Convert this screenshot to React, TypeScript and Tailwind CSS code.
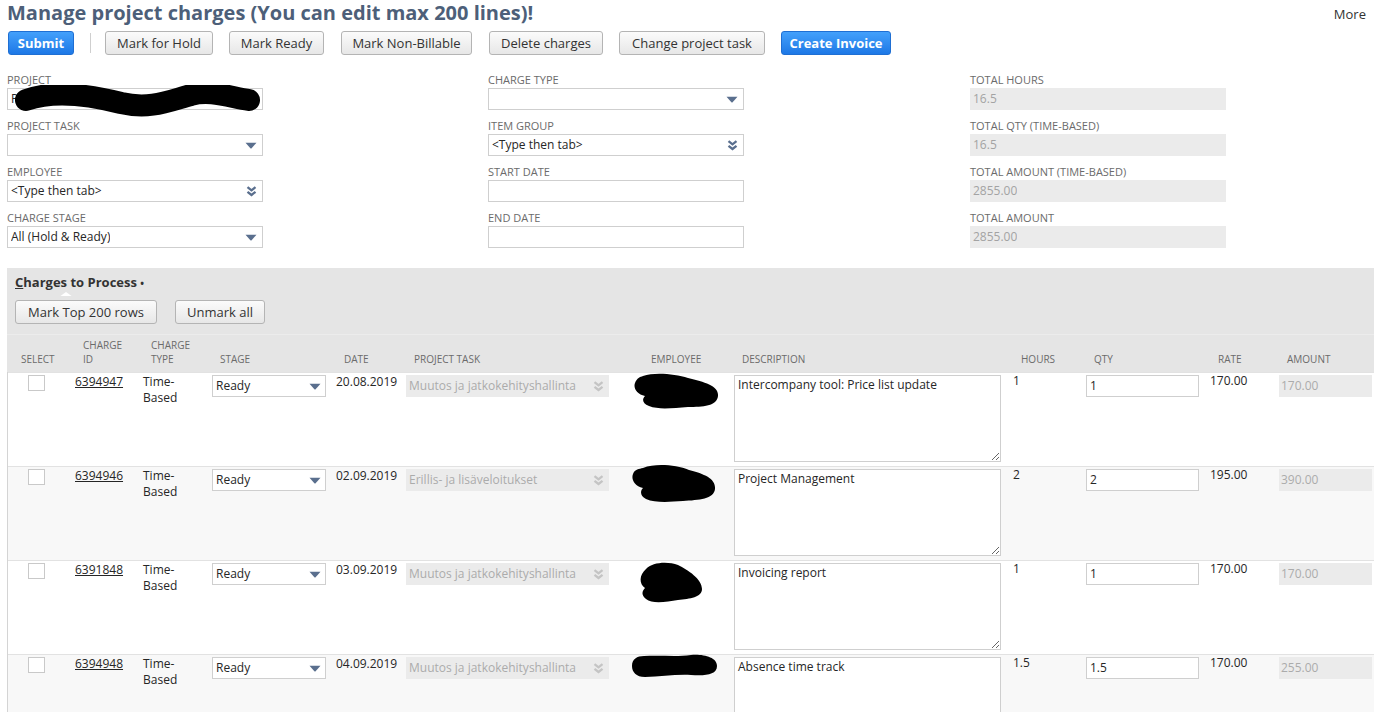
import React from "react";

const SLATE = "#5a6f8e";

function Tri({ color = SLATE }: { color?: string }) {
  return (
    <svg width="12" height="7" viewBox="0 0 12 7" className="shrink-0">
      <path d="M0.5 0.8 H11.5 L6.6 6.2 Q6 6.8 5.4 6.2 Z" fill={color} />
    </svg>
  );
}

function DChev({ color = SLATE }: { color?: string }) {
  return (
    <svg width="11" height="11" viewBox="0 0 11 11" className="shrink-0">
      <path d="M1.5 1.2 L5.5 4.4 L9.5 1.2 M1.5 5.8 L5.5 9 L9.5 5.8" stroke={color} strokeWidth="2.3" fill="none" />
    </svg>
  );
}

function Btn({ children, w, primary }: { children: React.ReactNode; w: string; primary?: boolean }) {
  if (primary) {
    return (
      <button
        className={`${w} h-[24px] shrink-0 rounded-[3px] border border-[#1f6fd3] bg-linear-to-b from-[#43a0fb] to-[#1d78e6] text-[13px] font-bold text-white leading-[22px]`}
      >
        {children}
      </button>
    );
  }
  return (
    <button
      className={`${w} h-[24px] shrink-0 rounded-[3px] border border-[#b4b4b4] bg-linear-to-b from-[#fbfbfb] to-[#e7e7e7] text-[13px] text-[#333] leading-[22px]`}
    >
      {children}
    </button>
  );
}

type FieldProps = {
  label: string;
  value?: string;
  icon?: "tri" | "dchev";
  readOnly?: boolean;
  redacted?: boolean;
};

function Field({ label, value, icon, readOnly, redacted }: FieldProps) {
  return (
    <div className="flex flex-col">
      <div className="h-[14px] text-[11px] leading-[14px] uppercase text-[#6b6b6b]">{label}</div>
      <div
        className={`relative mt-[1px] flex h-[22px] w-[256px] items-center justify-between pl-[3px] pr-[5px] text-[12px] ${
          readOnly ? "bg-[#ebebeb] text-[#a3a3a3]" : "border border-[#cfcfcf] bg-white text-[#262626]"
        }`}
      >
        <span className="truncate">{value}</span>
        {icon === "tri" && <Tri />}
        {icon === "dchev" && <DChev />}
        {redacted && (
          <svg
            width="252"
            height="34"
            viewBox="0 0 252 34"
            className="absolute left-[3px] top-[-4px]"
          >
            <path
              d="M15 15 C 40 6, 75 9, 110 18 C 140 25, 160 15, 180 10 C 198 5, 215 11, 238 15"
              stroke="#000"
              strokeWidth="22"
              strokeLinecap="round"
              fill="none"
            />
          </svg>
        )}
      </div>
    </div>
  );
}

const COLS = "grid-cols-[62px_68px_69px_124px_70px_237px_91px_279px_73px_124px_69px_99px]";

type Row = {
  id: string;
  date: string;
  task: string;
  desc: string;
  hours: string;
  qty: string;
  rate: string;
  amount: string;
  alt?: boolean;
  blob: { d: string; w: number; h: number; left: number; top: number };
};

const rows: Row[] = [
  {
    id: "6394947",
    date: "20.08.2019",
    task: "Muutos ja jatkokehityshallinta",
    desc: "Intercompany tool: Price list update",
    hours: "1",
    qty: "1",
    rate: "170.00",
    amount: "170.00",
    blob: {
      w: 86,
      h: 37,
      left: -5,
      top: 0,
      d: "M10 3 C 22 -1, 42 1, 55 5 C 72 9, 86 13, 85 23 C 84 33, 70 34, 55 34 C 40 35, 26 37, 16 33 C 9 30, 9 26, 12 23 C 4 21, 0 15, 2 10 C 4 5, 7 4, 10 3 Z",
    },
  },
  {
    id: "6394946",
    date: "02.09.2019",
    task: "Erillis- ja lisäveloitukset",
    desc: "Project Management",
    hours: "2",
    qty: "2",
    rate: "195.00",
    amount: "390.00",
    alt: true,
    blob: {
      w: 86,
      h: 40,
      left: -7,
      top: -3,
      d: "M12 4 C 25 -1, 45 1, 58 6 C 74 10, 85 15, 84 25 C 83 35, 68 36, 52 37 C 38 38, 24 39, 15 35 C 9 32, 9 27, 12 24 C 3 22, 0 15, 2 10 C 4 5, 8 5, 12 4 Z",
    },
  },
  {
    id: "6391848",
    date: "03.09.2019",
    task: "Muutos ja jatkokehityshallinta",
    desc: "Invoicing report",
    hours: "1",
    qty: "1",
    rate: "170.00",
    amount: "170.00",
    blob: {
      w: 66,
      h: 43,
      left: 0,
      top: 0,
      d: "M8 8 C 14 1, 30 0, 40 4 C 50 9, 64 18, 64 28 C 64 36, 52 38, 40 39 C 28 41, 14 43, 8 38 C 3 34, 4 30, 7 27 C 1 23, 1 14, 8 8 Z",
    },
  },
  {
    id: "6394948",
    date: "04.09.2019",
    task: "Muutos ja jatkokehityshallinta",
    desc: "Absence time track",
    hours: "1.5",
    qty: "1.5",
    rate: "170.00",
    amount: "255.00",
    alt: true,
    blob: {
      w: 88,
      h: 26,
      left: -7,
      top: -2,
      d: "M13 3 C 30 2, 45 4, 60 2 C 72 1, 86 4, 86 13 C 86 22, 74 23, 60 22 C 45 21, 30 24, 14 24 C 5 24, 1 19, 1 13 C 1 6, 6 3, 13 3 Z",
    },
  },
];

function HeaderCell({ lines }: { lines: string[] }) {
  return (
    <div className="flex flex-col justify-end pb-[6px] pl-[14px] text-[10px] leading-[14px] uppercase text-[#6b6b6b]">
      {lines.map((l) => (
        <div key={l}>{l}</div>
      ))}
    </div>
  );
}

function TableRow({ r }: { r: Row }) {
  return (
    <div className={`grid ${COLS} h-[94px] border-t border-[#e2e2e2] text-[12px] leading-[16px] ${r.alt ? "bg-[#f8f8f8]" : "bg-white"}`}>
      <div className="pl-[20px] pt-[2px]">
        <div className="h-[16px] w-[17px] border border-[#c9c9c9] bg-white" />
      </div>
      <div className="pl-[5px] pt-[1px]">
        <span className="underline">{r.id}</span>
      </div>
      <div className="pl-[5px] pt-[1px]">
        Time-
        <br />
        Based
      </div>
      <div className="pl-[5px] pt-[2px]">
        <div className="flex h-[22px] w-[114px] items-center justify-between border border-[#cfcfcf] bg-white pl-[3px] pr-[4px]">
          <span>Ready</span>
          <Tri />
        </div>
      </div>
      <div className="pl-[5px] pt-[1px]">{r.date}</div>
      <div className="pl-[5px] pt-[2px]">
        <div className="flex h-[22px] w-[203px] items-center justify-between bg-[#ebebeb] pl-[3px] pr-[5px] text-[#ababab]">
          <span>{r.task}</span>
          <DChev color="#c4c4c4" />
        </div>
      </div>
      <div className="relative">
        <svg
          width={r.blob.w}
          height={r.blob.h}
          viewBox={`0 0 ${r.blob.w} ${r.blob.h}`}
          className="absolute"
          style={{ left: r.blob.left, top: r.blob.top }}
        >
          <path d={r.blob.d} fill="#000" />
        </svg>
      </div>
      <div className="pl-[5px] pt-[2px]">
        <textarea
          readOnly
          value={r.desc}
          className="block h-[87px] w-[267px] border border-[#cfcfcf] bg-white px-[3px] pt-[1px] text-[12px] leading-[16px] text-[#262626] outline-none"
        />
      </div>
      <div className="pl-[5px] pt-[0px]">{r.hours}</div>
      <div className="pl-[5px] pt-[2px]">
        <div className="flex h-[22px] w-[113px] items-center border border-[#cfcfcf] bg-white pl-[3px]">{r.qty}</div>
      </div>
      <div className="pl-[5px] pt-[0px]">{r.rate}</div>
      <div className="pl-[5px] pt-[2px]">
        <div className="flex h-[22px] w-[93px] items-center bg-[#ebebeb] pl-[2px] text-[#ababab]">{r.amount}</div>
      </div>
    </div>
  );
}

export default function App() {
  return (
    <div className="h-[712px] w-[1375px] overflow-hidden bg-white font-['Open_Sans',sans-serif] text-[#262626]">
      <div className="flex items-start justify-between pl-[7px] pr-[9px]">
        <h1 className="text-[20px] font-bold leading-[26px] text-[#4d5f79]">
          Manage project charges (You can edit max 200 lines)!
        </h1>
        <div className="pt-[5px] text-[13px] leading-[18px] text-[#333]">More</div>
      </div>

      <div className="mt-[5px] flex items-center pl-[8px]">
        <Btn w="w-[66px]" primary>
          Submit
        </Btn>
        <div className="ml-[16px] mr-[14px] h-[20px] w-px bg-[#cfcfcf]" />
        <Btn w="w-[108px]">Mark for Hold</Btn>
        <div className="w-[16px]" />
        <Btn w="w-[95px]">Mark Ready</Btn>
        <div className="w-[17px]" />
        <Btn w="w-[131px]">Mark Non-Billable</Btn>
        <div className="w-[17px]" />
        <Btn w="w-[114px]">Delete charges</Btn>
        <div className="w-[16px]" />
        <Btn w="w-[146px]">Change project task</Btn>
        <div className="w-[16px]" />
        <Btn w="w-[110px]" primary>
          Create Invoice
        </Btn>
      </div>

      <div className="mt-[18px] grid grid-cols-[481px_482px_405px] pl-[7px]">
        <div className="flex flex-col gap-[9px]">
          <Field label="Project" value="P" icon="dchev" redacted />
          <Field label="Project Task" icon="tri" />
          <Field label="Employee" value="<Type then tab>" icon="dchev" />
          <Field label="Charge Stage" value="All (Hold & Ready)" icon="tri" />
        </div>
        <div className="flex flex-col gap-[9px]">
          <Field label="Charge Type" icon="tri" />
          <Field label="Item Group" value="<Type then tab>" icon="dchev" />
          <Field label="Start Date" />
          <Field label="End Date" />
        </div>
        <div className="flex flex-col gap-[9px]">
          <Field label="Total Hours" value="16.5" readOnly />
          <Field label="Total Qty (Time-Based)" value="16.5" readOnly />
          <Field label="Total Amount (Time-Based)" value="2855.00" readOnly />
          <Field label="Total Amount" value="2855.00" readOnly />
        </div>
      </div>

      <div className="ml-[7px] mt-[20px] w-[1367px] bg-[#e5e5e5]">
        <div className="flex h-[28px] flex-col pl-[8px]">
          <div className="pt-[5px] text-[13px] font-bold leading-[18px] text-[#333]">
            <span className="underline">C</span>harges to Process <span className="text-[10px]">•</span>
          </div>
          <svg width="14" height="5" viewBox="0 0 14 5" className="ml-[44px]">
            <path d="M0 5 L7 0 L14 5 Z" fill="#fff" />
          </svg>
        </div>
        <div className="mt-[4px] flex items-center pl-[8px]">
          <Btn w="w-[142px]">Mark Top 200 rows</Btn>
          <div className="w-[18px]" />
          <Btn w="w-[90px]">Unmark all</Btn>
        </div>
        <div className={`mt-[10px] grid ${COLS} h-[38px] border-t border-[#ececec]`}>
          <HeaderCell lines={["Select"]} />
          <HeaderCell lines={["Charge", "ID"]} />
          <HeaderCell lines={["Charge", "Type"]} />
          <HeaderCell lines={["Stage"]} />
          <HeaderCell lines={["Date"]} />
          <HeaderCell lines={["Project Task"]} />
          <HeaderCell lines={["Employee"]} />
          <HeaderCell lines={["Description"]} />
          <HeaderCell lines={["Hours"]} />
          <HeaderCell lines={["Qty"]} />
          <HeaderCell lines={["Rate"]} />
          <HeaderCell lines={["Amount"]} />
        </div>
        <div className="border-l border-[#d4d4d4]">
          {rows.map((r) => (
            <TableRow key={r.id} r={r} />
          ))}
        </div>
      </div>
    </div>
  );
}
